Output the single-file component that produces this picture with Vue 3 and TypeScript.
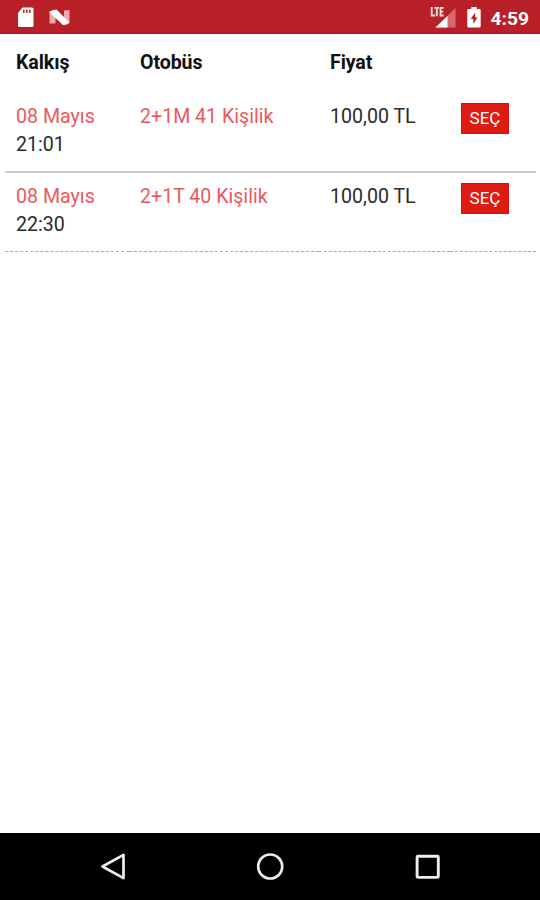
<script setup lang="ts">
interface Trip {
  date: string
  time: string
  bus: string
  price: string
}

const trips: Trip[] = [
  { date: '08 Mayıs', time: '21:01', bus: '2+1M 41 Kişilik', price: '100,00 TL' },
  { date: '08 Mayıs', time: '22:30', bus: '2+1T 40 Kişilik', price: '100,00 TL' },
]
</script>

<template>
  <div class="screen">
    <header class="status">
      <svg class="sd" width="17" height="20" viewBox="0 0 17 20">
        <path d="M5.500 .5H15Q16.500 .5 16.500 2V18.500Q16.500 20 15 20H2.500Q1 20 1 18.500V6Z" fill="#fff" />
        <path d="M6.800 2.700V6M9.800 2.700V6M12.800 2.700V6" stroke="#b91f27" stroke-width="1.500" />
      </svg>
      <svg class="nougat" width="22" height="18" viewBox="0 0 22 18">
        <path d="M.5 4H6.500V15.500H.5ZM15 2.500L20.500 2V14.500H15Z" fill="#e9a9ad" />
        <path d="M.5 3.500Q3 2 7.500 1.500L20.500 14.500Q18.500 17 14 17L.5 4.500Z" fill="#fff" />
      </svg>
      <span class="grow"></span>
      <svg class="signal" width="26" height="22" viewBox="0 0 26 22">
        <path d="M25.500 2V21.500H5.500Z" fill="#d36b70" />
        <path d="M17.500 10V21.500H5.500Z" fill="#fff" />
        <path d="M0 0H14.500V11.500H0Z" fill="#b91f27" />
        <path d="M1.700 1V9.500H5M4.500 1.800H9M6.800 1.800V10.300M13.700 1.800H10.500V9.500H13.700M10.500 5.600H13.300" fill="none" stroke="#f8e4e5" stroke-width="1.800" />
      </svg>
      <svg class="battery" width="14" height="21" viewBox="0 0 14 21">
        <path d="M4.300 0H9.700V2H12.500Q13.700 2 13.700 3.200V19.300Q13.700 20.500 12.500 20.500H1.500Q.3 20.500 .3 19.300V3.200Q.3 2 1.500 2H4.300Z" fill="#fff" />
        <path d="M8.200 5.500L3.700 12H6.300V17L10.500 10.500H8.200Z" fill="#b91f27" />
      </svg>
      <span class="clock">4:59</span>
    </header>

    <main class="content">
      <div class="row head">
        <div class="cell">Kalkış</div>
        <div class="cell">Otobüs</div>
        <div class="cell">Fiyat</div>
        <div class="cell"></div>
      </div>
      <div v-for="trip in trips" :key="trip.time" class="row trip">
        <div class="cell">
          <div class="accent">{{ trip.date }}</div>
          <div>{{ trip.time }}</div>
        </div>
        <div class="cell accent">{{ trip.bus }}</div>
        <div class="cell">{{ trip.price }}</div>
        <div class="cell"><button class="pick" type="button">SEÇ</button></div>
      </div>
    </main>

    <nav class="nav">
      <svg width="28" height="30" viewBox="0 0 28 30">
        <path d="M3.500 14.500L24.500 2.900V26.100Z" fill="none" stroke="#eee" stroke-width="2.700" stroke-linejoin="round" />
      </svg>
      <svg width="28" height="30" viewBox="0 0 28 30">
        <circle cx="14.200" cy="14.500" r="12" fill="none" stroke="#eee" stroke-width="2.700" />
      </svg>
      <svg width="28" height="30" viewBox="0 0 28 30">
        <rect x="4.100" y="4.200" width="21.200" height="21.200" rx="1" fill="none" stroke="#eee" stroke-width="2.900" />
      </svg>
    </nav>
  </div>
</template>

<style scoped>
.screen {
  width: 540px;
  height: 900px;
  display: flex;
  flex-direction: column;
  background: #fff;
  color: #2a2a2a;
  font-family: Roboto, "Liberation Sans", sans-serif;
  font-size: 19.6px;
  line-height: 28px;
  overflow: hidden;
}
.status {
  height: 34px;
  flex: none;
  box-sizing: border-box;
  display: flex;
  align-items: flex-start;
  padding: 7px 11px 0 17px;
  background: #b91f27;
  border-bottom: 1px solid #ad1820;
}
.status svg {
  flex: none;
}
.nougat {
  margin: 1px 0 0 15px;
}
.signal {
  margin-right: 11px;
  margin-top: -1px;
}
.battery {
  margin-right: 10px;
}
.grow {
  flex: 1;
}
.clock {
  color: #fff;
  font-size: 19.2px;
  font-weight: 700;
  line-height: 23px;
}
.content {
  flex: 1;
  padding: 4px 4px 0 5px;
}
.row {
  display: grid;
  grid-template-columns: 124px 190px 131px 1fr;
}
.cell {
  padding: 11px 0 12px 11px;
  white-space: nowrap;
}
.head {
  height: 54px;
  color: #111;
  font-weight: 700;
}
.head .cell {
  letter-spacing: -0.1px;
}
.trip .cell {
  border-bottom: 2px solid #ccc;
}
.trip:last-child .cell {
  padding-top: 10px;
  border-bottom: 1px dashed #aaa;
}
.accent {
  color: #ea595d;
}
.pick {
  display: block;
  width: 48px;
  height: 31px;
  margin: 0;
  padding: 0;
  border: 1px solid #d51408;
  background: #df1b12;
  color: #fff;
  font: 400 17px/29px Roboto, "Liberation Sans", sans-serif;
}
.nav {
  height: 67px;
  flex: none;
  box-sizing: border-box;
  display: flex;
  justify-content: center;
  gap: 129px;
  padding-top: 19px;
  background: #000;
}
</style>
